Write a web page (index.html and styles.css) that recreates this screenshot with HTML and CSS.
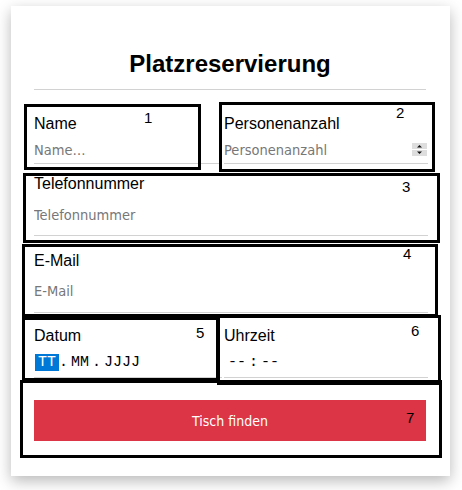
FILE: index.html
```html
<!DOCTYPE html>
<html lang="de">
<head>
<meta charset="utf-8">
<title>Platzreservierung</title>
<link rel="stylesheet" href="styles.css">
</head>
<body>
<div class="card">
  <h1 class="title">Platzreservierung</h1>
  <hr class="rule">
  <form class="form">
    <div class="row-two first">
      <div class="group">
        <label class="label">Name</label>
        <input class="field" type="text" placeholder="Name…">
      </div>
      <div class="group">
        <label class="label">Personenanzahl</label>
        <div class="num-wrap">
          <input class="field field-bare" type="text" placeholder="Personenanzahl">
          <span class="spin">
            <svg width="15" height="13" viewBox="0 0 15 13">
              <rect x="0" y="0" width="15" height="6" fill="#dedede"/>
              <rect x="0" y="7" width="15" height="6" fill="#dedede"/>
              <path d="M5 4.5 L10 4.5 L7.5 2 Z" fill="#111"/>
              <path d="M5 8.5 L10 8.5 L7.5 11 Z" fill="#111"/>
            </svg>
          </span>
        </div>
      </div>
    </div>
    <div class="group g-tel">
      <label class="label">Telefonnummer</label>
      <input class="field field-tel" type="text" placeholder="Telefonnummer">
    </div>
    <div class="group g-mail">
      <label class="label">E-Mail</label>
      <input class="field field-mail" type="text" placeholder="E-Mail">
    </div>
    <div class="row-two g-date">
      <div class="group">
        <label class="label">Datum</label>
        <div class="dt"><span class="seg sel">TT</span>.<span class="seg">MM</span>.<span class="seg">JJJJ</span></div>
      </div>
      <div class="group">
        <label class="label">Uhrzeit</label>
        <div class="dt"><span class="seg">--</span>:<span class="seg">--</span></div>
      </div>
    </div>
    <button class="btn" type="button">Tisch finden</button>
  </form>
</div>

<div class="box b1"></div>
<div class="box b2"></div>
<div class="box b3"></div>
<div class="box b4"></div>
<div class="box b5"></div>
<div class="box b6"></div>
<div class="box b7"></div>
<span class="num n1">1</span>
<span class="num n2">2</span>
<span class="num n3">3</span>
<span class="num n4">4</span>
<span class="num n5">5</span>
<span class="num n6">6</span>
<span class="num n7">7</span>
</body>
</html>
```
FILE: styles.css
```css
html, body {
  margin: 0;
  padding: 0;
  background: #fff;
}
body {
  width: 462px;
  height: 490px;
  overflow: hidden;
  position: relative;
  font-family: "Liberation Sans", Arial, sans-serif;
}
.card {
  box-sizing: border-box;
  margin: 6px 0 0 11px;
  width: 439px;
  height: 470px;
  padding: 44px 24px 0 23px;
  background: #fff;
  box-shadow: 0 5px 14px rgba(0, 0, 0, 0.28);
}
.title {
  margin: 0;
  font-size: 24px;
  line-height: 28px;
  font-weight: bold;
  text-align: center;
  color: #000;
}
.rule {
  margin: 11px 0 0;
  border: 0;
  height: 1px;
  background: #d2d2d2;
}
.form {
  margin: 0 -2px 0 0;
  display: flex;
  flex-direction: column;
}
.row-two {
  display: grid;
  grid-template-columns: 188px 1fr;
  column-gap: 2px;
}
.first { margin-top: 25px; }
.g-tel { margin-top: 11px; }
.g-mail { margin-top: 16px; }
.g-date { margin-top: 14px; }
.label {
  display: block;
  font-size: 16px;
  line-height: 18px;
  color: #000;
}
.field {
  display: block;
  width: 100%;
  box-sizing: content-box;
  height: 16px;
  line-height: 16px;
  margin: 0;
  padding: 9px 0 5px;
  border: 0;
  border-bottom: 1px solid #d2d2d2;
  border-radius: 0;
  outline: none;
  background: transparent;
  font-family: "DejaVu Sans Condensed", "DejaVu Sans", sans-serif;
  font-stretch: condensed;
  font-size: 14.5px;
  color: #000;
}
.field::placeholder {
  color: #777;
  opacity: 1;
}
.field-tel { padding: 14px 0 12px; }
.field-mail { padding: 13px 0 13px; }
.num-wrap {
  display: flex;
  border-bottom: 1px solid #d2d2d2;
}
.field-bare {
  flex: 1;
  min-width: 0;
  border-bottom: 0;
}
.spin {
  display: block;
  width: 15px;
  height: 13px;
  margin: 10px 1px 0 0;
}
.spin svg { display: block; }
.dt {
  height: 17px;
  padding: 9px 0 6px 1px;
  border-bottom: 1px solid #d2d2d2;
  font-family: "Liberation Mono", "Courier New", monospace;
  font-size: 15px;
  line-height: 17px;
  color: #000;
  white-space: pre;
}
.seg {
  padding: 0 3px;
}
.sel {
  background: #0078d7;
  color: #fff;
}
.btn {
  margin-top: 22px;
  margin-right: 2px;
  height: 41px;
  border: 0;
  border-radius: 0;
  background: #dc3545;
  color: #fff;
  font-family: "DejaVu Sans Condensed", "DejaVu Sans", sans-serif;
  font-stretch: condensed;
  font-size: 14px;
  cursor: pointer;
}

/* annotation overlays */
.box {
  position: absolute;
  box-sizing: border-box;
  border: 3px solid #000;
}
.b1 { left: 24px; top: 104px; width: 177px; height: 66px; }
.b2 { left: 219px; top: 102px; width: 216px; height: 70px; }
.b3 { left: 23px; top: 173px; width: 417px; height: 70px; }
.b4 { left: 22px; top: 244px; width: 416px; height: 73px; }
.b5 { left: 22px; top: 317px; width: 197px; height: 64px; }
.b6 { left: 217px; top: 315px; width: 224px; height: 70px; }
.b7 { left: 20px; top: 380px; width: 422px; height: 78px; }
.num {
  position: absolute;
  font-family: "Liberation Sans", Arial, sans-serif;
  font-size: 15px;
  line-height: 15px;
  color: #000;
}
.n1 { left: 144px; top: 110px; }
.n2 { left: 396px; top: 105px; }
.n3 { left: 402px; top: 179px; }
.n4 { left: 403px; top: 246px; }
.n5 { left: 196px; top: 325px; }
.n6 { left: 411px; top: 323px; }
.n7 { left: 406px; top: 410px; }
```
